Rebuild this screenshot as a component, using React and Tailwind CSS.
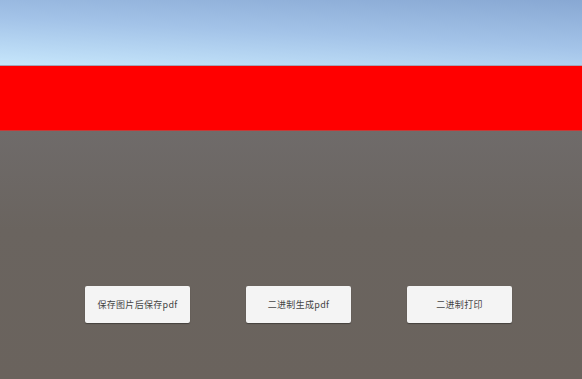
import React from "react";

const BUTTONS = ["保存图片后保存pdf", "二进制生成pdf", "二进制打印"];

export default function App() {
  return (
    <div
      className="w-[582px] h-[379px] flex flex-col overflow-hidden"
      style={{ fontFamily: '"Noto Sans CJK SC", "Noto Sans", sans-serif' }}
    >
      {/* sky */}
      <div className="h-[65px] bg-[linear-gradient(183deg,#88a8d3_0%,#a3c3e8_50%,#c6e6fb_100%)]" />
      <div className="h-px bg-[#a7a4b8]" />
      {/* red band */}
      <div className="h-[65px] bg-[#ff0000] border-b border-[#c63a38]" />
      {/* ground */}
      <div className="flex-1 bg-[linear-gradient(180deg,#6f6b6a_0%,#6a645f_40%,#6a635d_100%)] pt-[155px] pl-[85px]">
        <div className="flex gap-[56px]">
          {BUTTONS.map((label) => (
            <button
              key={label}
              className="w-[105px] h-[37px] bg-[#f4f4f4] rounded-[2px] shadow-[0_1px_1px_rgba(0,0,0,0.35)] text-[9px] tracking-[0.3px] text-[#444] flex items-center justify-center"
            >
              {label}
            </button>
          ))}
        </div>
      </div>
    </div>
  );
}
